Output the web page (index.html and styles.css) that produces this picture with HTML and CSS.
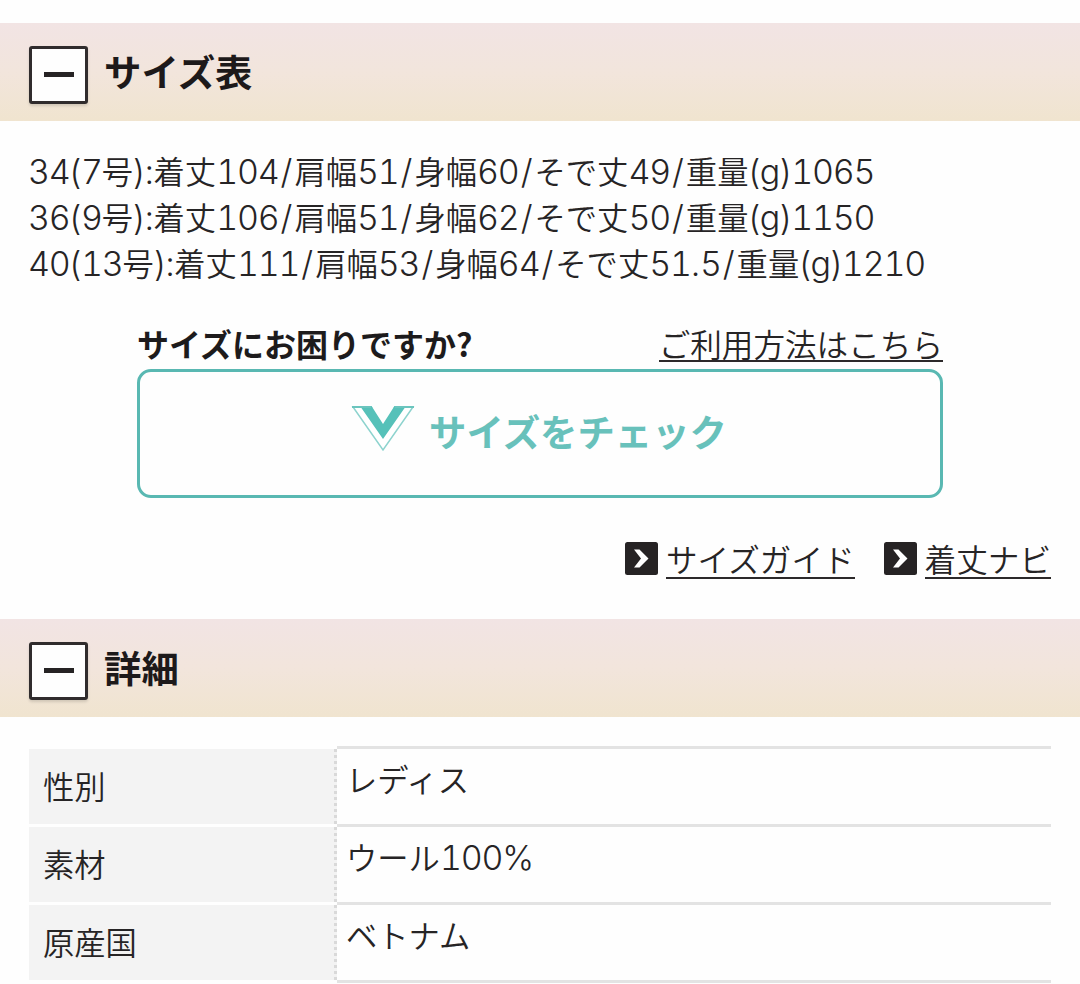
FILE: index.html
```html
<!DOCTYPE html>
<html lang="ja">
<head>
<meta charset="utf-8">
<title>サイズ表</title>
<link rel="stylesheet" href="styles.css">
</head>
<body>
<main class="page">
  <section>
    <header class="band"><span class="toggle"><span class="minus"></span></span><h2 class="band-title">サイズ表</h2></header>
    <div class="sizes">
      <p class="size-row"><span class="n">34</span><span class="p">(</span><span class="n">7</span>号<span class="p">):</span>着丈<span class="n">104</span><span class="s">/</span>肩幅<span class="n">51</span><span class="s">/</span>身幅<span class="n">60</span><span class="s">/</span>そで丈<span class="n">49</span><span class="s">/</span>重量<span class="p">(g)</span><span class="n">1065</span></p>
      <p class="size-row"><span class="n">36</span><span class="p">(</span><span class="n">9</span>号<span class="p">):</span>着丈<span class="n">106</span><span class="s">/</span>肩幅<span class="n">51</span><span class="s">/</span>身幅<span class="n">62</span><span class="s">/</span>そで丈<span class="n">50</span><span class="s">/</span>重量<span class="p">(g)</span><span class="n">1150</span></p>
      <p class="size-row"><span class="n">40</span><span class="p">(</span><span class="n">13</span>号<span class="p">):</span>着丈<span class="n">111</span><span class="s">/</span>肩幅<span class="n">53</span><span class="s">/</span>身幅<span class="n">64</span><span class="s">/</span>そで丈<span class="n">51</span><span class="p">.</span><span class="n">5</span><span class="s">/</span>重量<span class="p">(g)</span><span class="n">1210</span></p>
    </div>
    <div class="checker">
      <div class="checker-head"><strong class="question">サイズにお困りですか?</strong><a class="link">ご利用方法はこちら</a></div>
      <div class="check-button">
        <svg class="logo" width="64" height="48" viewBox="0 0 64 48"><path d="M2 2H62L32 45Z" fill="#fff" stroke="#8dd3ce" stroke-width="1.5"/><path d="M20 0H44L32 19Z" fill="#fefefe"/><path d="M9 1H20.500L32 19 43.500 1H55L32 34Z" fill="#56c1b9"/><path d="M1 2H20M44 2H63" stroke="#6bc5be" stroke-width="2"/></svg>
        <span class="check-label">サイズをチェック</span>
      </div>
    </div>
    <nav class="guides">
      <svg class="arrow" width="33" height="33" viewBox="0 0 33 33"><rect width="33" height="33" rx="2.5" fill="#262324"/><path d="M9 7.500H14.500L23.500 16.500 14.500 25.500H9L16 16.500Z" fill="#fff"/></svg>
      <a class="link guide-link">サイズガイド</a>
      <svg class="arrow arrow-next" width="33" height="33" viewBox="0 0 33 33"><rect width="33" height="33" rx="2.5" fill="#262324"/><path d="M9 7.500H14.500L23.500 16.500 14.500 25.500H9L16 16.500Z" fill="#fff"/></svg>
      <a class="link guide-link">着丈ナビ</a>
    </nav>
  </section>
  <section>
    <header class="band"><span class="toggle"><span class="minus"></span></span><h2 class="band-title">詳細</h2></header>
    <dl class="details">
      <dt class="term">性別</dt><dd class="value">レディス</dd>
      <dt class="term">素材</dt><dd class="value">ウール<span class="n">100</span><span class="p">%</span></dd>
      <dt class="term">原産国</dt><dd class="value">ベトナム</dd>
    </dl>
  </section>
</main>
</body>
</html>
```
FILE: styles.css
```css
* { box-sizing: border-box; }
body { margin: 0; background: #fefefe; color: #262425; font: 350 31.3px/46px "Noto Sans CJK JP", sans-serif; }
.page { height: 984px; padding-top: 23px; overflow: hidden; }
.band { display: flex; align-items: center; height: 98px; padding-left: 29px; padding-top: 5px; background: linear-gradient(#f2e4e4, #f2e5dc 50%, #f0e4cf); }
.toggle { display: flex; align-items: center; justify-content: center; width: 59px; height: 58px; border: 3px solid #302c2d; border-radius: 3px; background: #fefefe; box-shadow: 0 2px 3px #0002; }
.minus { width: 30px; height: 5px; background: #262324; }
.band-title { margin: 0 0 8px 16px; font-size: 37.400px; line-height: 48px; font-weight: 700; color: #1d191a; }
.sizes { padding: 27px 0 0 28px; }
.size-row { margin: 0; height: 46px; white-space: nowrap; }
.n, .p, .s { font-family: Inter, sans-serif; font-size: 34px; line-height: 1; }
.n { font-feature-settings: "tnum"; letter-spacing: -1.2px; }
.p { letter-spacing: -0.5px; }
.s { padding: 0 2px; }
.checker { width: 806px; margin: 35px auto 0; }
.checker-head { display: flex; justify-content: space-between; height: 48px; }
.question { font-size: 32px; line-height: 44px; font-weight: 700; color: #1d1b1c; }
.link { height: 41px; font-size: 31.6px; line-height: 44px; border-bottom: 2px solid #2c292a; }
.check-button { display: flex; align-items: center; justify-content: center; height: 129px; padding: 0 2px 6px 0; border: 3px solid #59b8b2; border-radius: 14px; }
.logo { margin: -4px 14px 0 0; }
.check-label { color: #68c1bb; font-size: 37.400px; font-weight: 700; }
.guides { display: flex; justify-content: flex-end; padding: 40px 29px 0 0; height: 121px; }
.guide-link { line-height: 41px; }
.arrow { margin: 4px 8px 0 0; }
.arrow-next { margin-left: 29px; }
.details { display: grid; grid-template-columns: 308px 714px; grid-auto-rows: 78px; margin: 29px 29px 0; border-bottom: 0; }
.term { margin: 3px 0 0; padding: 14px 0 0 14px; background: #f3f3f3; border-right: 3px dotted #d9d9d9; }
.value { margin: 0; padding: 7px 0 0 9px; border-top: 3px solid #e3e3e3; }
.value:last-child { border-bottom: 3px solid #e3e3e3; height: 81px; margin-bottom: -3px; }
```
